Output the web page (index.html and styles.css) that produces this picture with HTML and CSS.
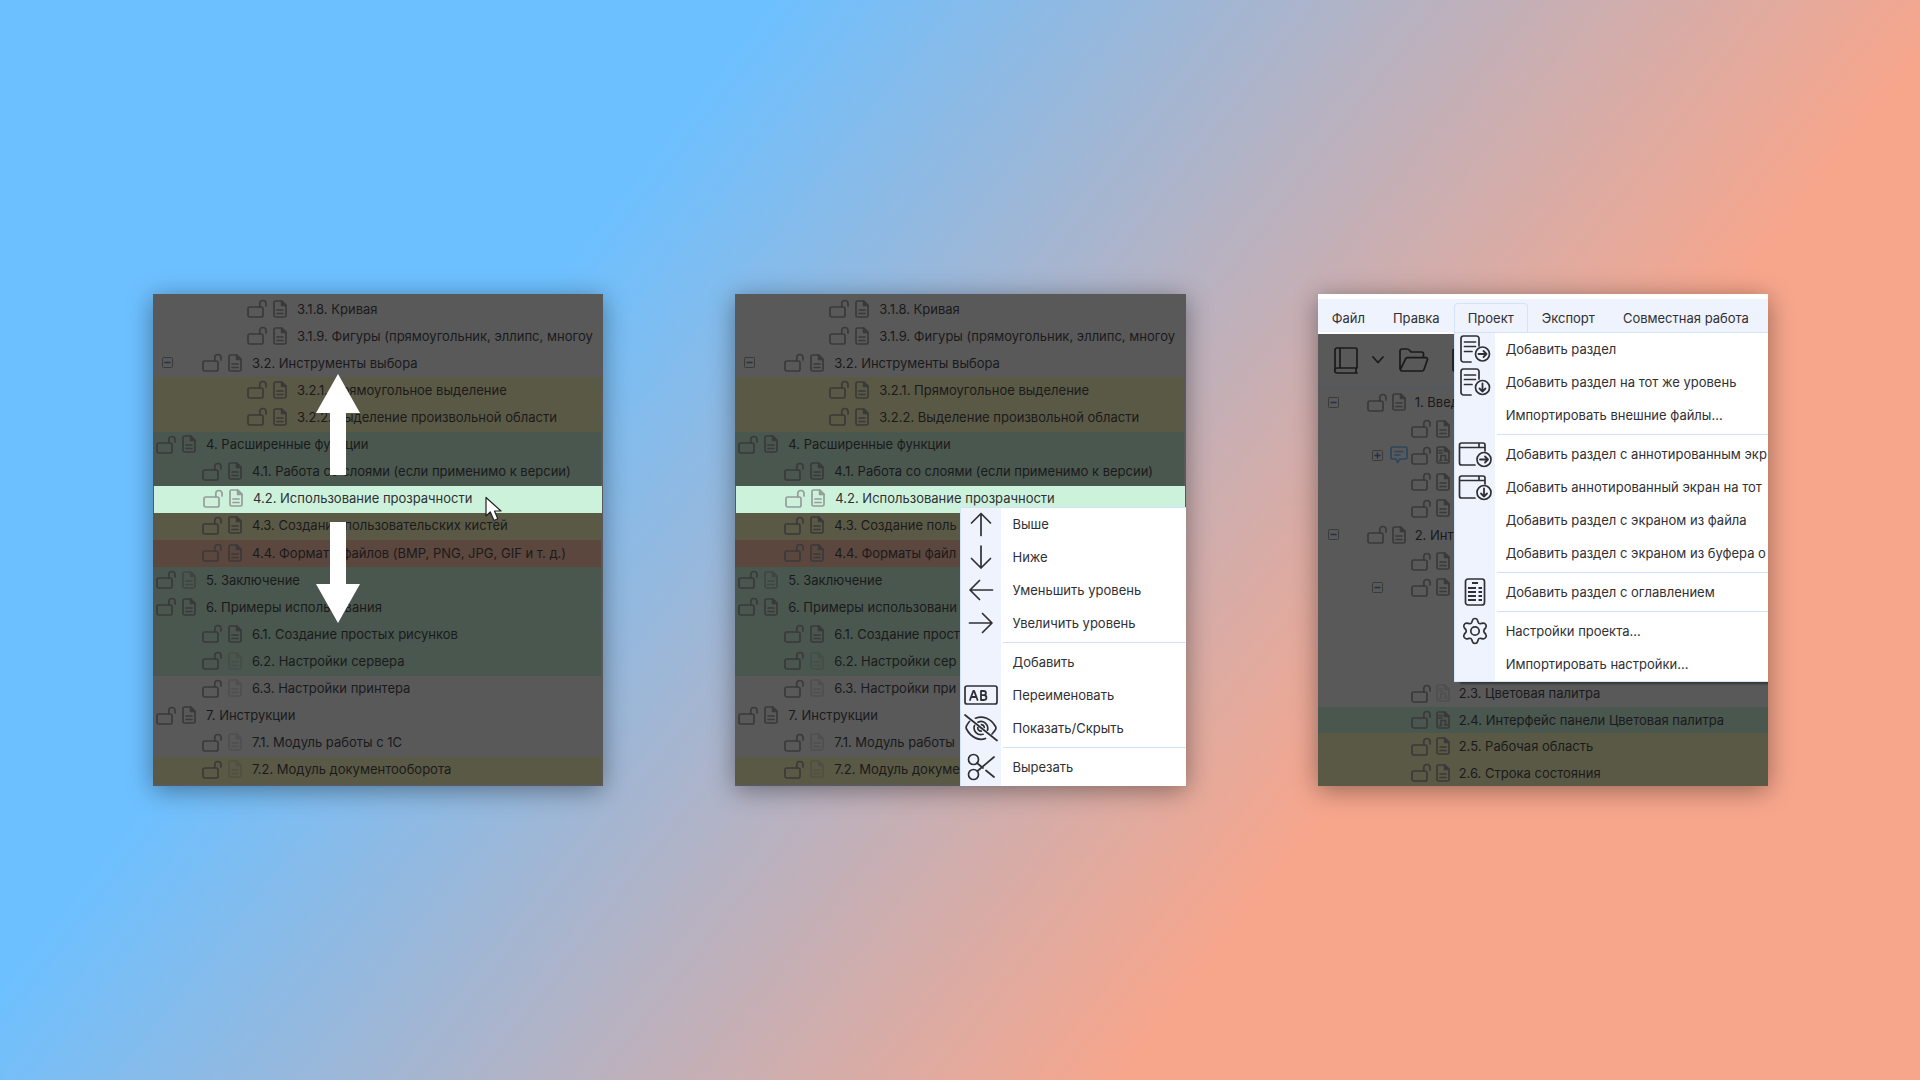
FILE: index.html
```html
<!DOCTYPE html>
<html lang="ru">
<head>
<meta charset="utf-8">
<meta name="viewport" content="width=device-width, initial-scale=1">
<title>Работа с разделами проекта</title>
<link rel="stylesheet" href="styles.css">
</head>
<body>
<svg class="sprite" aria-hidden="true">
  <symbol id="lock" viewBox="0 0 20 19"><rect x="1" y="8" width="15" height="10" rx="1.8"/><path d="M12.8 8V4.6a3.1 3.1 0 0 1 6.2 0V7"/></symbol>
  <symbol id="doc" viewBox="0 0 14 18"><path d="M8.7 1H2.6A1.6 1.6 0 0 0 1 2.600V15.400A1.600 1.600 0 0 0 2.600 17H11.400A1.600 1.600 0 0 0 13 15.400V5.300Z"/><path class="solid" d="M8.600 1V5.400H13Z"/><path d="M4 10h6M4 13.500h6"/></symbol>
  <symbol id="docscreen" viewBox="0 0 14 18"><path d="M8.700 1H2.600A1.600 1.600 0 0 0 1 2.600V15.400A1.600 1.600 0 0 0 2.600 17H11.400A1.600 1.600 0 0 0 13 15.400V5.300Z"/><path class="solid" d="M8.600 1V5.400H13Z"/><path d="M3 4.500h3M3 7h3M5 14.500V9.500h4.500v4M3.500 14.500h2M8.500 14h3"/></symbol>
  <symbol id="minus" viewBox="0 0 11 11"><rect x=".5" y=".5" width="10" height="10" rx="1"/><path class="sign" d="M3 5.500h5"/></symbol>
  <symbol id="plus" viewBox="0 0 11 11"><rect x=".5" y=".5" width="10" height="10" rx="1"/><path class="sign" d="M3 5.500h5M5.500 3v5"/></symbol>
  <symbol id="note" viewBox="0 0 18 18"><path d="M2.500 1h13A1.500 1.500 0 0 1 17 2.500v9a1.500 1.500 0 0 1-1.500 1.500H10l-2.500 3.500L6 13H2.500A1.500 1.500 0 0 1 1 11.500v-9A1.500 1.500 0 0 1 2.500 1ZM5 5.500h8M5 9h5"/></symbol>
  <symbol id="up" viewBox="0 0 34 34"><path d="M17 28.500V6.500M7.500 16 17 6.500l9.500 9.500"/></symbol>
  <symbol id="down" viewBox="0 0 34 34"><path d="M17 6v22M7.500 18.500 17 28l9.500-9.500"/></symbol>
  <symbol id="left" viewBox="0 0 34 34"><path d="M28.500 17H6.500M15.500 7.500 6 17l9.500 9.500"/></symbol>
  <symbol id="right" viewBox="0 0 34 34"><path d="M5.500 17h22M18.500 7.500 28 17l-9.500 9.500"/></symbol>
  <symbol id="rename" viewBox="0 0 34 34"><rect x="1" y="8" width="32" height="18" rx="2"/><path class="bold" d="m6 22 3.300-9h.9l3.300 9M7.200 19h5.200M17 13v9M17 13h2.800a2 2 0 0 1 0 4.200H17h3a2.300 2.300 0 0 1 0 4.800h-3"/></symbol>
  <symbol id="hide" viewBox="0 0 34 34"><path d="M1 4 33 29.500M11.500 7.200C19 4 27 8 31.500 15.500q.8 1.500 0 3-1.500 2.500-3.500 4.500M5.500 10.500Q3.500 12.700 2.500 15q-.8 1.500 0 3C7 26.500 15 30 21.500 27.500M14 11.200a6.800 6.800 0 0 1 9.500 8M10.500 14.500a6.800 6.800 0 0 0 8.500 8.800M17.500 13.700a3.300 3.300 0 0 1 2.800 2.800M13.800 16.500a3.300 3.300 0 0 0 3.500 3.700"/></symbol>
  <symbol id="cut" viewBox="0 0 34 34"><circle cx="9.500" cy="9.500" r="5"/><circle cx="9.500" cy="24.500" r="5"/><path d="M13 13l6 5M22 20.500l8 6.500M13.500 21 30 7"/></symbol>
  <symbol id="pageright" viewBox="0 0 34 34"><path d="M13 30H5.500A2.500 2.500 0 0 1 3 27.500v-21A2.500 2.500 0 0 1 5.500 4h13A2.500 2.500 0 0 1 21 6.500V14M6.500 10h11M6.500 14.500h11M6.500 19.500H14"/><circle cx="24.500" cy="22" r="7"/><path class="bold" d="M20.500 22h8M25.500 19l3 3-3 3"/></symbol>
  <symbol id="pagedown" viewBox="0 0 34 34"><path d="M13 30H5.500A2.500 2.500 0 0 1 3 27.500v-21A2.500 2.500 0 0 1 5.500 4h13A2.500 2.500 0 0 1 21 6.500V14M6.500 10h11M6.500 14.500h11M6.500 19.500H14"/><circle cx="24.500" cy="22.500" r="7"/><path class="bold" d="M24.500 18.500v8M21.500 23.500l3 3 3-3"/></symbol>
  <symbol id="winright" viewBox="0 0 34 34"><path d="M17 28H3.500A2 2 0 0 1 1.500 26V8A2 2 0 0 1 3.500 6h21.500A2 2 0 0 1 27 8v6M1.500 10.500H27M21 6v4.500"/><circle cx="26" cy="22.500" r="7"/><path class="bold" d="M22 22.500h8M27 19.500l3 3-3 3"/></symbol>
  <symbol id="windown" viewBox="0 0 34 34"><path d="M17 28H3.500A2 2 0 0 1 1.500 26V8A2 2 0 0 1 3.500 6h21.500A2 2 0 0 1 27 8v6M1.500 10.500H27M21 6v4.500"/><circle cx="26" cy="22.500" r="7"/><path class="bold" d="M26 18.500v8M23 23.500l3 3 3-3"/></symbol>
  <symbol id="toc" viewBox="0 0 34 34"><rect x="7.500" y="4" width="19" height="26" rx="2.500"/><path class="bold" stroke-linecap="butt" d="M14 8h6M10 13h8M10 17h8M10 21h8M10 25h8M20.500 13h3.500M20.500 17h3.500M20.500 21h3.500M20.500 25h3.500"/></symbol>
  <symbol id="gear" viewBox="0 0 34 34"><path d="M14.500 6.200Q15 4.500 17 4.500t2.500 1.700l.8 2.300q.6 1.500 2.200 1.200l2.600-.5q1.700-.2 2.700 1.400t0 3l-1.600 2q-1 1.400 0 2.800l1.600 2q1 1.400 0 3t-2.700 1.400l-2.600-.5q-1.600-.3-2.200 1.200l-.8 2.300q-.5 1.700-2.500 1.700t-2.500-1.700l-.8-2.300q-.6-1.500-2.200-1.200l-2.600.5q-1.700.2-2.700-1.400t0-3l1.600-2q1-1.400 0-2.800l-1.600-2q-1-1.400 0-3t2.700-1.400l2.600.5q1.600.3 2.200-1.200Z"/><circle cx="17" cy="17" r="4.200"/></symbol>
  <symbol id="book" viewBox="0 0 24 27"><path d="M3 1h18.500A1.500 1.500 0 0 1 23 2.500V21H3a2.500 2.500 0 0 0 0 5h20M1 23.500V3A2 2 0 0 1 3 1M6 1v20M22 21v5"/></symbol>
  <symbol id="chevron" viewBox="0 0 12 8"><path d="m1 1 5 5.500L11 1"/></symbol>
  <symbol id="folder" viewBox="0 0 31 24"><path d="M2 21V3A2 2 0 0 1 4 1h5q1.500 0 2.500 1.200L13 4h10.500A2 2 0 0 1 25.500 6v3M4 23h20q1.500 0 2-1.500l3.300-9.500q.7-2-1.300-2.300H9.500q-1.500.1-2 1.500L2.800 20.500Q2 23 4 23"/></symbol>
  <symbol id="save" viewBox="0 0 24 24"><rect x="1" y="1" width="22" height="22" rx="2"/></symbol>
</svg>

<main class="stage">

  <section class="card" aria-label="Перетаскивание раздела">
    <ul class="tree">
      <li class="row l2"><svg class="lock"><use href="#lock"/></svg><svg class="doc"><use href="#doc"/></svg><span>3.1.8. Кривая</span></li>
      <li class="row l2"><svg class="lock"><use href="#lock"/></svg><svg class="doc"><use href="#doc"/></svg><span>3.1.9. Фигуры (прямоугольник, эллипс, многоу</span></li>
      <li class="row l1 parent"><svg class="toggle"><use href="#minus"/></svg><svg class="lock"><use href="#lock"/></svg><svg class="doc"><use href="#doc"/></svg><span>3.2. Инструменты выбора</span></li>
      <li class="row l2 yellow"><svg class="lock"><use href="#lock"/></svg><svg class="doc"><use href="#doc"/></svg><span>3.2.1. Прямоугольное выделение</span></li>
      <li class="row l2 yellow"><svg class="lock"><use href="#lock"/></svg><svg class="doc"><use href="#doc"/></svg><span>3.2.2. Выделение произвольной области</span></li>
      <li class="row l0 green"><svg class="lock"><use href="#lock"/></svg><svg class="doc"><use href="#doc"/></svg><span>4. Расширенные функции</span></li>
      <li class="row l1 green"><svg class="lock"><use href="#lock"/></svg><svg class="doc"><use href="#doc"/></svg><span>4.1. Работа со слоями (если применимо к версии)</span></li>
      <li class="row l1 active"><svg class="lock"><use href="#lock"/></svg><svg class="doc"><use href="#doc"/></svg><span>4.2. Использование прозрачности</span></li>
      <li class="row l1 yellow"><svg class="lock"><use href="#lock"/></svg><svg class="doc"><use href="#doc"/></svg><span>4.3. Создание пользовательских кистей</span></li>
      <li class="row l1 red"><svg class="lock"><use href="#lock"/></svg><svg class="doc"><use href="#doc"/></svg><span>4.4. Форматы файлов (BMP, PNG, JPG, GIF и т. д.)</span></li>
      <li class="row l0 green"><svg class="lock"><use href="#lock"/></svg><svg class="doc half"><use href="#doc"/></svg><span>5. Заключение</span></li>
      <li class="row l0 green"><svg class="lock"><use href="#lock"/></svg><svg class="doc"><use href="#doc"/></svg><span>6. Примеры использования</span></li>
      <li class="row l1 green"><svg class="lock"><use href="#lock"/></svg><svg class="doc"><use href="#doc"/></svg><span>6.1. Создание простых рисунков</span></li>
      <li class="row l1 green"><svg class="lock"><use href="#lock"/></svg><svg class="doc faint"><use href="#doc"/></svg><span>6.2. Настройки сервера</span></li>
      <li class="row l1"><svg class="lock"><use href="#lock"/></svg><svg class="doc faint"><use href="#doc"/></svg><span>6.3. Настройки принтера</span></li>
      <li class="row l0"><svg class="lock"><use href="#lock"/></svg><svg class="doc"><use href="#doc"/></svg><span>7. Инструкции</span></li>
      <li class="row l1"><svg class="lock"><use href="#lock"/></svg><svg class="doc faint"><use href="#doc"/></svg><span>7.1. Модуль работы с 1С</span></li>
      <li class="row l1 yellow"><svg class="lock"><use href="#lock"/></svg><svg class="doc faint"><use href="#doc"/></svg><span>7.2. Модуль документооборота</span></li>
    </ul>
    <svg class="arrow arrow-up" viewBox="0 0 46 102"><path d="M23 0 45 39H31V101H15V39H1Z"/></svg>
    <svg class="arrow arrow-down" viewBox="0 0 46 102"><path d="M23 101 45 62H31V0H15V62H1Z"/></svg>
    <svg class="cursor" viewBox="0 0 18 26"><path d="M1 1.500V20l4.300-4L9 24.500l3.800-1.700L9.500 15H16Z"/></svg>
  </section>

  <section class="card" aria-label="Контекстное меню раздела">
    <ul class="tree">
      <li class="row l2"><svg class="lock"><use href="#lock"/></svg><svg class="doc"><use href="#doc"/></svg><span>3.1.8. Кривая</span></li>
      <li class="row l2"><svg class="lock"><use href="#lock"/></svg><svg class="doc"><use href="#doc"/></svg><span>3.1.9. Фигуры (прямоугольник, эллипс, многоу</span></li>
      <li class="row l1 parent"><svg class="toggle"><use href="#minus"/></svg><svg class="lock"><use href="#lock"/></svg><svg class="doc"><use href="#doc"/></svg><span>3.2. Инструменты выбора</span></li>
      <li class="row l2 yellow"><svg class="lock"><use href="#lock"/></svg><svg class="doc"><use href="#doc"/></svg><span>3.2.1. Прямоугольное выделение</span></li>
      <li class="row l2 yellow"><svg class="lock"><use href="#lock"/></svg><svg class="doc"><use href="#doc"/></svg><span>3.2.2. Выделение произвольной области</span></li>
      <li class="row l0 green"><svg class="lock"><use href="#lock"/></svg><svg class="doc"><use href="#doc"/></svg><span>4. Расширенные функции</span></li>
      <li class="row l1 green"><svg class="lock"><use href="#lock"/></svg><svg class="doc"><use href="#doc"/></svg><span>4.1. Работа со слоями (если применимо к версии)</span></li>
      <li class="row l1 active"><svg class="lock"><use href="#lock"/></svg><svg class="doc"><use href="#doc"/></svg><span>4.2. Использование прозрачности</span></li>
      <li class="row l1 yellow"><svg class="lock"><use href="#lock"/></svg><svg class="doc"><use href="#doc"/></svg><span>4.3. Создание поль</span></li>
      <li class="row l1 red"><svg class="lock"><use href="#lock"/></svg><svg class="doc"><use href="#doc"/></svg><span>4.4. Форматы файл</span></li>
      <li class="row l0 green"><svg class="lock"><use href="#lock"/></svg><svg class="doc half"><use href="#doc"/></svg><span>5. Заключение</span></li>
      <li class="row l0 green"><svg class="lock"><use href="#lock"/></svg><svg class="doc"><use href="#doc"/></svg><span>6. Примеры использовани</span></li>
      <li class="row l1 green"><svg class="lock"><use href="#lock"/></svg><svg class="doc"><use href="#doc"/></svg><span>6.1. Создание прост</span></li>
      <li class="row l1 green"><svg class="lock"><use href="#lock"/></svg><svg class="doc faint"><use href="#doc"/></svg><span>6.2. Настройки сер</span></li>
      <li class="row l1"><svg class="lock"><use href="#lock"/></svg><svg class="doc faint"><use href="#doc"/></svg><span>6.3. Настройки при</span></li>
      <li class="row l0"><svg class="lock"><use href="#lock"/></svg><svg class="doc"><use href="#doc"/></svg><span>7. Инструкции</span></li>
      <li class="row l1"><svg class="lock"><use href="#lock"/></svg><svg class="doc faint"><use href="#doc"/></svg><span>7.1. Модуль работы</span></li>
      <li class="row l1 yellow"><svg class="lock"><use href="#lock"/></svg><svg class="doc faint"><use href="#doc"/></svg><span>7.2. Модуль докуме</span></li>
    </ul>
    <div class="menu context" role="menu">
      <button class="item" role="menuitem"><svg><use href="#up"/></svg>Выше</button>
      <button class="item" role="menuitem"><svg><use href="#down"/></svg>Ниже</button>
      <button class="item" role="menuitem"><svg><use href="#left"/></svg>Уменьшить уровень</button>
      <button class="item" role="menuitem"><svg><use href="#right"/></svg>Увеличить уровень</button>
      <hr>
      <button class="item" role="menuitem"><svg></svg>Добавить</button>
      <button class="item" role="menuitem"><svg><use href="#rename"/></svg>Переименовать</button>
      <button class="item" role="menuitem"><svg><use href="#hide"/></svg>Показать/Скрыть</button>
      <hr>
      <button class="item" role="menuitem"><svg><use href="#cut"/></svg>Вырезать</button>
    </div>
  </section>

  <section class="card app" aria-label="Меню проекта">
    <nav class="menubar">
      <button>Файл</button>
      <button>Правка</button>
      <button class="open">Проект</button>
      <button>Экспорт</button>
      <button>Совместная работа</button>
    </nav>
    <div class="toolbar">
      <button aria-label="Проект"><svg width="24" height="27"><use href="#book"/></svg></button>
      <button aria-label="Список"><svg width="12" height="8"><use href="#chevron"/></svg></button>
      <button aria-label="Открыть"><svg width="31" height="24"><use href="#folder"/></svg></button>
      <button class="next" aria-label="Сохранить"><svg width="24" height="24"><use href="#save"/></svg></button>
    </div>
    <ul class="tree">
      <li class="row l1 parent"><svg class="toggle"><use href="#minus"/></svg><svg class="lock"><use href="#lock"/></svg><svg class="doc"><use href="#doc"/></svg><span>1. Введ</span></li>
      <li class="row l2"><svg class="lock"><use href="#lock"/></svg><svg class="doc"><use href="#doc"/></svg></li>
      <li class="row l2 parent"><svg class="toggle"><use href="#plus"/></svg><svg class="note"><use href="#note"/></svg><svg class="lock"><use href="#lock"/></svg><svg class="doc"><use href="#docscreen"/></svg></li>
      <li class="row l2"><svg class="lock"><use href="#lock"/></svg><svg class="doc"><use href="#doc"/></svg></li>
      <li class="row l2"><svg class="lock"><use href="#lock"/></svg><svg class="doc"><use href="#doc"/></svg></li>
      <li class="row l1 parent"><svg class="toggle"><use href="#minus"/></svg><svg class="lock"><use href="#lock"/></svg><svg class="doc"><use href="#doc"/></svg><span>2. Инт</span></li>
      <li class="row l2"><svg class="lock"><use href="#lock"/></svg><svg class="doc"><use href="#doc"/></svg></li>
      <li class="row l2 parent"><svg class="toggle"><use href="#minus"/></svg><svg class="lock"><use href="#lock"/></svg><svg class="doc"><use href="#doc"/></svg></li>
      <li class="row"></li>
      <li class="row"></li>
      <li class="row"></li>
      <li class="row l2"><svg class="lock"><use href="#lock"/></svg><svg class="doc faint"><use href="#docscreen"/></svg><span>2.3. Цветовая палитра</span></li>
      <li class="row l2 green"><svg class="lock"><use href="#lock"/></svg><svg class="doc"><use href="#docscreen"/></svg><span>2.4. Интерфейс панели Цветовая палитра</span></li>
      <li class="row l2 yellow"><svg class="lock"><use href="#lock"/></svg><svg class="doc"><use href="#doc"/></svg><span>2.5. Рабочая область</span></li>
      <li class="row l2 yellow"><svg class="lock"><use href="#lock"/></svg><svg class="doc"><use href="#doc"/></svg><span>2.6. Строка состояния</span></li>
    </ul>
    <div class="menu project" role="menu">
      <button class="item" role="menuitem"><svg><use href="#pageright"/></svg>Добавить раздел</button>
      <button class="item" role="menuitem"><svg><use href="#pagedown"/></svg>Добавить раздел на тот же уровень</button>
      <button class="item" role="menuitem"><svg></svg>Импортировать внешние файлы...</button>
      <hr>
      <button class="item" role="menuitem"><svg><use href="#winright"/></svg>Добавить раздел с аннотированным экр</button>
      <button class="item" role="menuitem"><svg><use href="#windown"/></svg>Добавить аннотированный экран на тот</button>
      <button class="item" role="menuitem"><svg></svg>Добавить раздел с экраном из файла</button>
      <button class="item" role="menuitem"><svg></svg>Добавить раздел с экраном из буфера о</button>
      <hr>
      <button class="item" role="menuitem"><svg><use href="#toc"/></svg>Добавить раздел с оглавлением</button>
      <hr>
      <button class="item" role="menuitem"><svg><use href="#gear"/></svg>Настройки проекта...</button>
      <button class="item" role="menuitem"><svg></svg>Импортировать настройки...</button>
    </div>
  </section>

</main>
</body>
</html>
```
FILE: styles.css
```css
* {
  box-sizing: border-box;
}

body {
  margin: 0;
  font-family: Inter, "Noto Sans", sans-serif;
  font-size: 13px;
  line-height: 20px;
  color: #1a1a1c;
}

button {
  border: 0;
  padding: 0;
  background: none;
  font: inherit;
  color: inherit;
  white-space: nowrap;
}

svg {
  display: block;
  flex: none;
  fill: none;
  stroke: currentColor;
  stroke-width: 1.700;
  stroke-linecap: round;
  stroke-linejoin: round;
}

.sprite {
  position: absolute;
  width: 0;
  height: 0;
}

.solid {
  fill: currentColor;
}

.stage {
  display: grid;
  grid-template-columns: repeat(auto-fit, minmax(400px, 1fr));
  gap: 132px;
  align-content: center;
  min-height: 100vh;
  padding: 40px 152px 40px 153px;
  background: linear-gradient(128deg, #6dc0ff 28%, #f7a68c 71%);
}

.card {
  position: relative;
  display: flex;
  flex-direction: column;
  min-height: 492px;
  overflow: hidden;
  background: #595959;
  box-shadow: 0 4px 24px rgba(0, 0, 0, .4);
}

/* Section tree */
.tree {
  flex: 1;
  display: grid;
  grid-auto-rows: minmax(26px, 1fr);
  margin: 0;
  padding: 2px 2px 2px 0;
  list-style: none;
}

.row {
  display: flex;
  align-items: center;
  min-width: 0;
  overflow: hidden;
  padding-bottom: 2px;
  white-space: nowrap;
}

.l0 { padding-left: 3px; }
.l1 { padding-left: 49px; }
.l2 { padding-left: 94px; }
.l1.parent { padding-left: 9px; }
.l2.parent { padding-left: 54px; }

.green { background: #4a574e; }
.yellow { background: #5a5945; }
.red { background: #5c473f; }

.active {
  margin: 0 -1px 0 1px;
  background: #cdf2dc;
  color: #303034;
}

.lock {
  width: 20px;
  height: 19px;
  margin-right: 6px;
  color: #3a3a3a;
}

.doc {
  width: 14px;
  height: 18px;
  margin-right: 10px;
  color: #3a3a3a;
}

.half { opacity: .6; }
.faint { opacity: .3; }

.active .lock,
.active .doc {
  color: #979c99;
}

.toggle {
  width: 11px;
  height: 11px;
  margin-right: 29px;
  color: #3a3a3a;
  stroke-width: 1;
}

.sign {
  stroke: #26304a;
  stroke-width: 1.500;
}

.arrow {
  position: absolute;
  left: 162px;
  width: 46px;
  height: 102px;
  fill: #fff;
  stroke: none;
}

.arrow-up { top: 80px; }
.arrow-down { top: 228px; }

.cursor {
  position: absolute;
  left: 332px;
  top: 202px;
  width: 18px;
  height: 26px;
  fill: #fff;
  stroke: #222;
  stroke-width: 1.200;
}

/* Drop-down menus */
.menu {
  position: absolute;
  right: 0;
  display: flex;
  flex-direction: column;
  overflow: hidden;
  border-top: 1px solid #d3e4fa;
  border-left: 1px solid #d3e4fa;
  background: linear-gradient(90deg, #eef3fd 40px, #fff 40px);
  color: #303034;
}

.context {
  left: 50%;
  top: 213px;
  bottom: 0;
}

.project {
  left: 136px;
  top: 38px;
  border-bottom: 1px solid #d3e4fa;
  box-shadow: 6px 2px 2px rgba(0, 0, 0, .4);
}

.item {
  display: flex;
  align-items: center;
  height: 33px;
  flex: none;
  padding: 0 0 2px 3px;
  text-align: left;
}

.item svg {
  width: 34px;
  height: 34px;
  margin-right: 14px;
}

.bold {
  stroke-width: 1.800;
}

.menu hr {
  flex: none;
  width: auto;
  height: 1px;
  margin: 2px 0 3px 42px;
  border: 0;
  background: #cfe2fa;
}

/* Application window */
.menubar {
  display: flex;
  align-items: flex-end;
  height: 40px;
  border-top: 5px solid #fff;
  border-bottom: 2px solid #fff;
  background: #eef3fd;
  color: #303034;
}

.menubar button {
  height: 29px;
  padding: 0 13px;
  border: 1px solid transparent;
  border-bottom: 0;
  border-radius: 4px 4px 0 0;
}

.menubar .open {
  border-color: #d3e4fa;
}

.toolbar {
  display: flex;
  align-items: center;
  height: 55px;
  padding: 0 0 2px 16px;
  border-bottom: 1px solid #4b5a68;
}

.toolbar button {
  margin-right: 14px;
}

.toolbar .next {
  margin-left: 9px;
}

.app .tree {
  padding: 0;
}

.app .row { padding-bottom: 0; }
.app .lock { margin-right: 5px; }
.app .doc { margin-right: 9px; }
.app .toggle { margin-right: 28px; }
.app .l2 { padding-left: 93px; }
.app .l1.parent { padding-left: 10px; }
.app .l2.parent { padding-left: 54px; }

.app .l2.parent .toggle:has(+ .note) {
  margin-right: 7px;
}

.note {
  width: 18px;
  height: 18px;
  margin-right: 3px;
  color: #28485f;
}
```
